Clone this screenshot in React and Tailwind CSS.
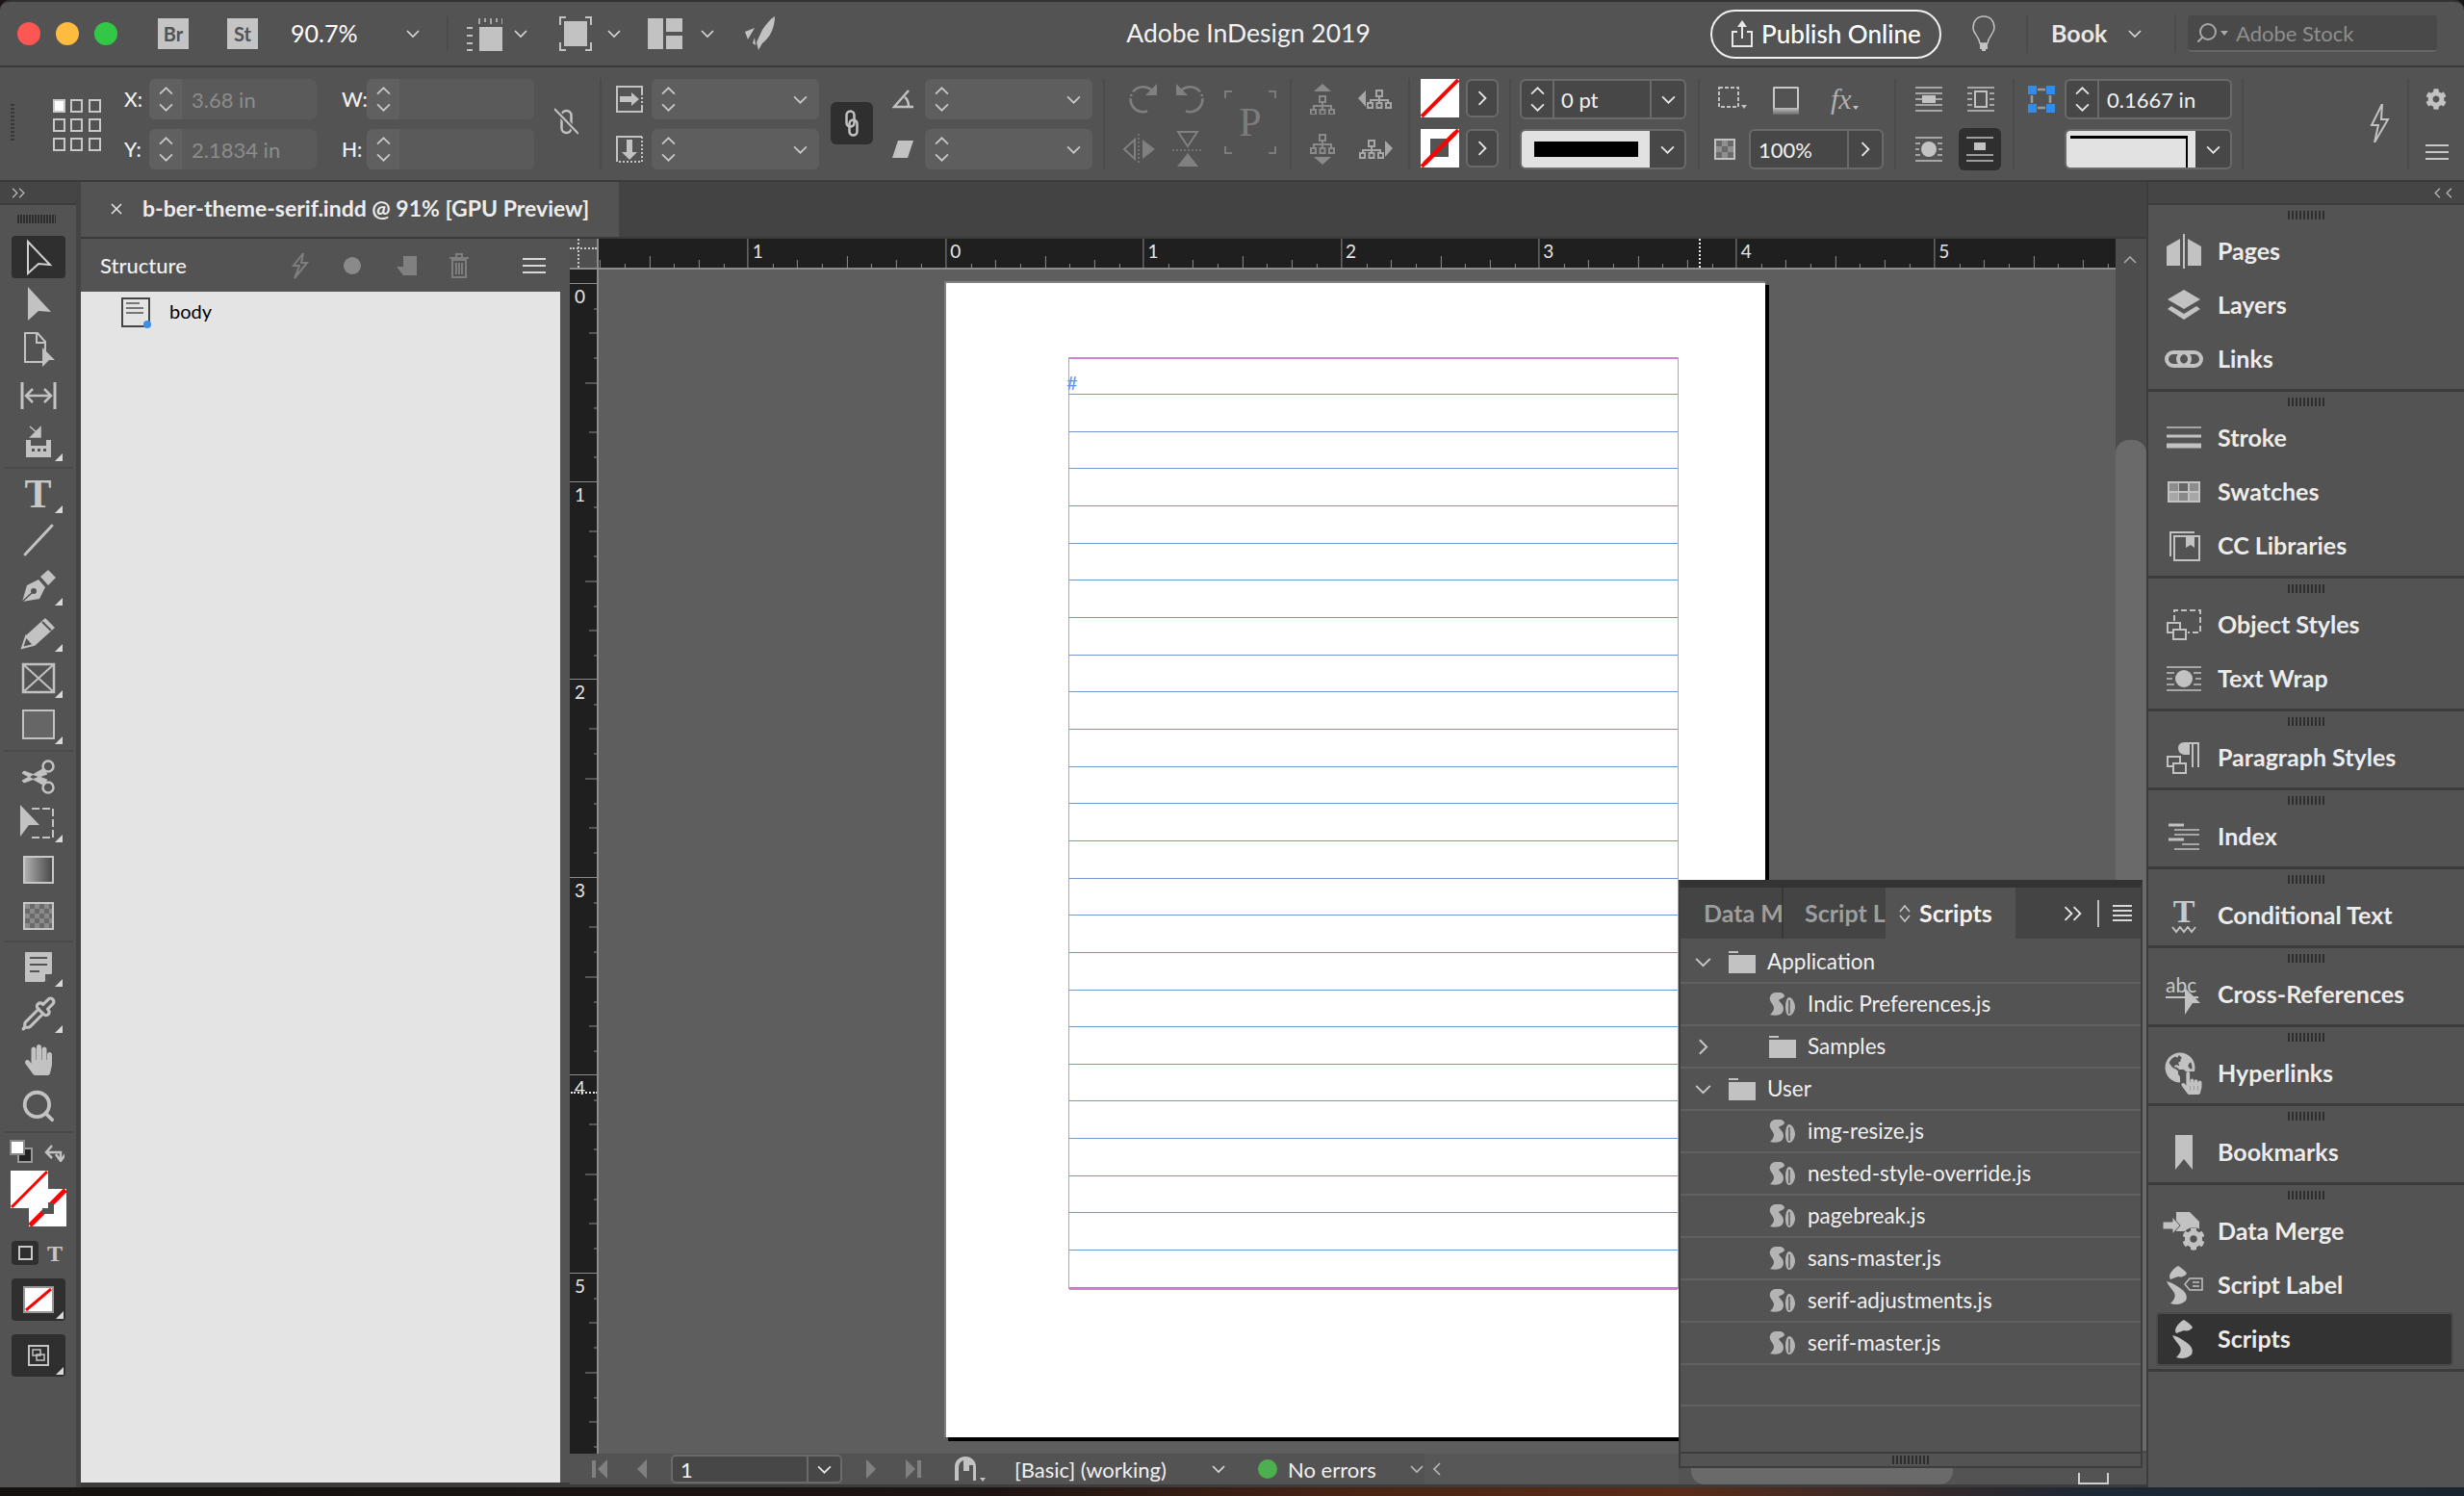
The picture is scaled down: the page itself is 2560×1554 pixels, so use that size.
import React from "react";
import { FaCog, FaHandPaper, FaGlobeAmericas, FaHandPointer } from "react-icons/fa";
import { Pipette, Search } from "lucide-react";

const C = "#c2c2c2";

function Svg({ w = 40, h = 40, vb, children, className = "" }) {
  return (
    <svg width={w} height={h} viewBox={vb || `0 0 ${w} ${h}`} className={"shrink-0 " + className}>
      {children}
    </svg>
  );
}

function Chev({ dir = "down", size = 14, color = "#d8d8d8" }) {
  const pts = {
    down: "1,4 7,10 13,4",
    up: "1,10 7,4 13,10",
    right: "4,1 10,7 4,13",
    left: "10,1 4,7 10,13",
  }[dir];
  return (
    <svg width={size} height={size} viewBox="0 0 14 14" className="shrink-0">
      <polyline points={pts} fill="none" stroke={color} strokeWidth="1.6" />
    </svg>
  );
}

function Grip({ className = "" }) {
  return (
    <div className={"h-[9px] w-[39px] bg-[repeating-linear-gradient(90deg,#2e2e2e_0_2px,transparent_2px_4px)] " + className} />
  );
}

function Divider({ ml }) {
  return <div style={{ marginLeft: ml }} className="h-[94px] w-[2px] shrink-0 bg-[#4b4b4b]" />;
}

function Slash({ w = 40, h = 40, sw = 4 }) {
  return (
    <svg width={w} height={h} viewBox={`0 0 ${w} ${h}`} className="block">
      <rect width={w} height={h} fill="#fff" />
      <line x1="1" y1={h - 1} x2={w - 1} y2="1" stroke="#f00" strokeWidth={sw} />
    </svg>
  );
}

/* ---------- title bar ---------- */

function TitleBar() {
  return (
    <div className="relative flex h-[68px] shrink-0 items-center rounded-t-[10px] border-t-2 border-[#333] bg-[#535353]">
      <div className="ml-[18px] h-[24px] w-[24px] rounded-full bg-[#fc5753]" />
      <div className="ml-[16px] h-[24px] w-[24px] rounded-full bg-[#fdbc40]" />
      <div className="ml-[16px] h-[24px] w-[24px] rounded-full bg-[#33c748]" />
      <div className="ml-[42px] flex h-[32px] w-[32px] items-center justify-center bg-[#c4c4c4] text-[20px] font-bold text-[#535353]">Br</div>
      <div className="ml-[40px] flex h-[32px] w-[32px] items-center justify-center bg-[#c4c4c4] text-[20px] font-bold text-[#535353]">St</div>
      <div className="ml-[34px] w-[70px] text-[25px] text-white">90.7%</div>
      <div className="ml-[50px]"><Chev /></div>
      <div className="ml-[28px] h-[36px] w-[2px] bg-[#4b4b4b]" />
      <div className="ml-[18px]">
        <Svg w={38} h={36}>
          <rect x="14" y="11" width="24" height="25" fill={C} />
          <path d="M14 2v6M20 2v4M26 2v6M32 2v4M38 2v6" stroke={C} strokeWidth="1.5" />
          <path d="M1 12h6M1 20h6M1 28h6M1 35h6" stroke={C} strokeWidth="2" />
        </Svg>
      </div>
      <div className="ml-[12px]"><Chev /></div>
      <div className="ml-[33px]">
        <Svg w={34} h={36}>
          <rect x="5" y="5" width="24" height="26" fill={C} />
          <path d="M7 1H1v8M27 1h6v8M7 35H1v-8M27 35h6v-8" fill="none" stroke={C} strokeWidth="2" />
        </Svg>
      </div>
      <div className="ml-[16px]"><Chev /></div>
      <div className="ml-[28px]">
        <Svg w={36} h={32}>
          <rect x="0" y="0" width="16" height="32" fill={C} />
          <rect x="19" y="0" width="17" height="14" fill={C} />
          <rect x="19" y="18" width="17" height="14" fill={C} />
        </Svg>
      </div>
      <div className="ml-[19px]"><Chev /></div>
      <div className="ml-[30px]">
        <Svg w={34} h={36}>
          <path d="M33 0C33 12 28 22 20 28L16 35 14 27 20 14 C24 8 28 3 33 0zM2 16l10-4-7 12zM13 30l-3-2 2-6z" fill={C} />
        </Svg>
      </div>
      <div className="ml-[356px] w-[270px] text-center text-[26.5px] text-[#f2f2f2]">Adobe InDesign 2019</div>
      <div className="ml-[345px] flex h-[51px] w-[240px] items-center justify-center gap-[8px] rounded-full border-2 border-[#f0f0f0] text-[26px] font-medium text-white">
        <Svg w={24} h={30}>
          <path d="M12 1l5 7h-4v12h-2V8H7z" fill="#e8e8e8" />
          <path d="M7 13H2v15h20V13h-5" fill="none" stroke="#e8e8e8" strokeWidth="2" />
        </Svg>
        Publish Online
      </div>
      <div className="ml-[30px]">
        <Svg w={28} h={38}>
          <path d="M14 1C7 1 3 6 3 13c0 6 6 8 7 16h8c1-8 7-10 7-16 0-7-4-12-11-12z" fill="none" stroke={C} strokeWidth="1.5" />
          <rect x="10" y="29" width="8" height="6" fill={C} />
          <rect x="12" y="35" width="4" height="2" fill={C} />
        </Svg>
      </div>
      <div className="ml-[30px] h-[40px] w-[2px] bg-[#4b4b4b]" />
      <div className="ml-[24px] w-[62px] text-[25px] font-bold text-[#e8e8e8]">Book</div>
      <div className="ml-[18px]"><Chev /></div>
      <div className="ml-[34px] h-[40px] w-[2px] bg-[#4b4b4b]" />
      <div className="ml-[12px] flex h-[38px] w-[259px] items-center rounded-[4px] border-b-2 border-[#666] bg-[#494949] pl-[8px]">
        <Search size={24} color="#a8a8a8" className="-scale-x-100" />
        <span className="ml-[2px] h-0 w-0 border-x-[4px] border-t-[5px] border-x-transparent border-t-[#a8a8a8]" />
        <span className="ml-[8px] text-[22px] text-[#8f8f8f]">Adobe Stock</span>
      </div>
    </div>
  );
}

/* ---------- control bar ---------- */

function Stepper({ dark, shade }) {
  return (
    <div className={"flex h-full w-[34px] shrink-0 flex-col items-center justify-center gap-[2px] " + (dark ? "border-r-2 border-[#6a6a6a]" : shade ? "bg-[#606060]" : "")}>
      <Chev dir="up" size={15} color={dark ? "#e8e8e8" : "#c8c8c8"} />
      <Chev size={15} color={dark ? "#e8e8e8" : "#c8c8c8"} />
    </div>
  );
}

function Field({ text, chevron, shade }) {
  return (
    <div className={"flex h-[42px] w-[174px] items-center overflow-hidden rounded-[6px] " + (shade ? "bg-[#5a5a5a]" : "bg-[#5e5e5e]")}>
      <Stepper shade={shade} />
      <span className="ml-[10px] flex-1 text-[22px] text-[#8c8c8c]">{text}</span>
      {chevron && <span className="mr-[12px]"><Chev size={15} color="#c8c8c8" /></span>}
    </div>
  );
}

function Labeled({ label, text }) {
  return (
    <div className="flex items-center">
      <span className="w-[26px] text-[21px] font-medium text-[#f0f0f0]">{label}</span>
      <Field text={text} shade />
    </div>
  );
}

function Col({ ml, children, gap = 10 }) {
  return (
    <div style={{ marginLeft: ml, rowGap: gap }} className="flex shrink-0 flex-col">
      {children}
    </div>
  );
}

function IconRow({ h = 42, gap = 0, children }) {
  return (
    <div style={{ height: h, columnGap: gap }} className="flex items-center">
      {children}
    </div>
  );
}

function DarkBox({ className = "", children }) {
  return (
    <div className={"flex h-[42px] items-center overflow-hidden rounded-[6px] border-2 border-[#6a6a6a] bg-[#474747] " + className}>
      {children}
    </div>
  );
}

function Tree({ dir }) {
  return (
    <Svg w={26} h={32}>
      {dir === "up" && <path d="M13 0l9 8H4z" fill="#8a8a8a" />}
      {dir === "down" && <path d="M13 32l9-8H4z" fill="#8a8a8a" />}
      <g transform={dir === "up" ? "translate(0,12)" : "translate(0,0)"} fill="none" stroke="#8a8a8a" strokeWidth="2">
        <rect x="10" y="1" width="6" height="6" />
        <path d="M13 7v4M4 15v-4h18v4M13 11v4" />
        <rect x="1" y="15" width="5" height="5" />
        <rect x="10.5" y="15" width="5" height="5" />
        <rect x="20" y="15" width="5" height="5" />
      </g>
    </Svg>
  );
}

function TreeSide({ flip }) {
  return (
    <Svg w={36} h={20} className={flip ? "-scale-x-100" : ""}>
      <path d="M0 9l8-8v17z" fill="#a6a6a6" />
      <g fill="none" stroke="#a6a6a6" strokeWidth="2">
        <rect x="19" y="1" width="6" height="6" />
        <path d="M22 7v4M13 15v-4h18v4M22 11v4" />
        <rect x="10" y="14" width="5" height="5" />
        <rect x="19.5" y="14" width="5" height="5" />
        <rect x="29" y="14" width="5" height="5" />
      </g>
    </Svg>
  );
}

function Wrap({ kind }) {
  return (
    <Svg w={28} h={26}>
      <path d="M0 1h28M0 25h28" stroke={C} strokeWidth="1.5" />
      {kind === "a" && <path d="M0 7h28M0 13h28M0 19h28" stroke={C} strokeWidth="1.5" />}
      {kind === "a" && <rect x="7" y="9" width="14" height="8" fill={C} />}
      {kind === "b" && <rect x="8" y="5" width="12" height="16" fill="none" stroke={C} strokeWidth="2" />}
      {kind === "b" && <path d="M0 7h5M0 13h5M0 19h5M23 7h5M23 13h5M23 19h5" stroke={C} strokeWidth="1.5" />}
      {kind === "c" && <circle cx="14" cy="13" r="8" fill={C} />}
      {kind === "c" && <path d="M0 7h5M0 13h4M0 19h5M23 7h5M24 13h4M23 19h5" stroke={C} strokeWidth="1.5" />}
      {kind === "d" && <rect x="8" y="6" width="12" height="8" fill={C} />}
      {kind === "d" && <path d="M0 19h28" stroke={C} strokeWidth="1.5" />}
    </Svg>
  );
}

function RefGrid() {
  const dots = [0, 1, 2];
  return (
    <div className="grid w-[50px] grid-cols-3 gap-x-[5px] gap-y-[6px]">
      {dots.map((r) =>
        dots.map((c) => (
          <div key={r + "-" + c} className={"h-[14px] w-[13px] border-2 border-[#c8c8c8] " + (r + c === 0 ? "bg-white" : "")} />
        ))
      )}
    </div>
  );
}

function Rotate({ flip }) {
  return (
    <Svg w={40} h={36} className={flip ? "-scale-x-100" : ""}>
      <path d="M33 12A13 13 0 1 0 27 30" fill="none" stroke="#808080" strokeWidth="2.5" strokeDasharray="26 3 2 2" />
      <path d="M36 2v12H24z" fill="#808080" />
    </Svg>
  );
}

function ArrowBtn() {
  return (
    <div className="flex h-[40px] w-[34px] items-center justify-center rounded-[6px] border-2 border-[#6a6a6a] bg-[#474747]">
      <Chev dir="right" size={16} color="#e8e8e8" />
    </div>
  );
}

function ControlBar() {
  return (
    <div className="flex h-[121px] shrink-0 items-start border-y-2 border-[#3a3a3a] bg-[#535353] pt-[12px]">
      <div className="ml-[11px] mt-[26px] h-[38px] w-[4px] bg-[repeating-linear-gradient(0deg,#383838_0_2px,transparent_2px_4px)]" />
      <div className="ml-[40px] mt-[21px]"><RefGrid /></div>
      <Col ml={24}>
        <Labeled label="X:" text="3.68 in" />
        <Labeled label="Y:" text="2.1834 in" />
      </Col>
      <Col ml={26}>
        <Labeled label="W:" />
        <Labeled label="H:" />
      </Col>
      <div className="ml-[21px] mt-[30px]">
        <Svg w={25} h={28}>
          <rect x="7.5" y="3" width="10" height="23" rx="5" fill="none" stroke={C} strokeWidth="2.5" />
          <path d="M0 1l25 26" stroke="#535353" strokeWidth="5" />
          <path d="M0 1l25 26" stroke={C} strokeWidth="2" />
        </Svg>
      </div>
      <Divider ml={22} />
      <Col ml={15}>
        <div className="flex h-[42px] items-center gap-[9px]">
          <Svg w={28} h={28}>
            <path d="M27 8V1H1v26h26V22" fill="none" stroke={C} strokeWidth="2" />
            <path d="M27 8v14M1 27h26" fill="none" stroke={C} strokeWidth="2" strokeDasharray="2 2" />
            <path d="M4 11h12V7l8 7-8 7v-4H4z" fill={C} />
          </Svg>
          <Field chevron />
        </div>
        <div className="flex h-[42px] items-center gap-[9px]">
          <Svg w={28} h={28}>
            <path d="M1 27V1h26" fill="none" stroke={C} strokeWidth="2" />
            <path d="M27 1v26H1" fill="none" stroke={C} strokeWidth="2" strokeDasharray="2 2" />
            <path d="M11 4h6v13h5l-8 8-8-8h5z" fill={C} />
          </Svg>
          <Field chevron />
        </div>
      </Col>
      <div className="ml-[12px] mt-[24px] flex h-[44px] w-[44px] items-center justify-center rounded-[6px] bg-[#2f2f2f]">
        <Svg w={14} h={28}>
          <rect x="1.5" y="1.5" width="8" height="16" rx="4" fill="none" stroke={C} strokeWidth="2.5" />
          <rect x="4.5" y="10.5" width="8" height="16" rx="4" fill="none" stroke={C} strokeWidth="2.5" />
        </Svg>
      </div>
      <Col ml={20}>
        <div className="flex h-[42px] items-center gap-[12px]">
          <Svg w={22} h={20}>
            <path d="M17 1L2 18h20M13 8c3 2 4 5 4 10" fill="none" stroke={C} strokeWidth="2.5" />
          </Svg>
          <Field chevron />
        </div>
        <div className="flex h-[42px] items-center gap-[12px]">
          <Svg w={22} h={18}>
            <path d="M6 0h16l-6 18H0z" fill={C} />
          </Svg>
          <Field chevron />
        </div>
      </Col>
      <Divider ml={11} />
      <Col ml={18}>
        <IconRow gap={12}>
          <Rotate />
          <Rotate flip />
        </IconRow>
        <IconRow gap={12}>
          <Svg w={38} h={36}>
            <path d="M17 2v32" stroke="#808080" strokeWidth="1.5" strokeDasharray="2 2" />
            <path d="M13 8v20L2 18z" fill="none" stroke="#808080" strokeWidth="2" />
            <path d="M21 8v20l13-10z" fill="#808080" />
          </Svg>
          <Svg w={36} h={38}>
            <path d="M18 16L8 1h20z" fill="none" stroke="#808080" strokeWidth="2" />
            <path d="M2 20h32" stroke="#808080" strokeWidth="1.5" strokeDasharray="2 2" />
            <path d="M18 23L7 37h22z" fill="#808080" />
          </Svg>
        </IconRow>
      </Col>
      <div className="relative ml-[14px] mt-[12px] flex h-[66px] w-[54px] items-center justify-center text-[42px] leading-none text-[#7c7c7c] [font-family:'Liberation_Serif',serif]">
        <span className="absolute left-0 top-0 h-[8px] w-[8px] border-l-2 border-t-2 border-[#7c7c7c]" />
        <span className="absolute right-0 top-0 h-[8px] w-[8px] border-r-2 border-t-2 border-[#7c7c7c]" />
        <span className="absolute bottom-0 left-0 h-[8px] w-[8px] border-b-2 border-l-2 border-[#7c7c7c]" />
        <span className="absolute bottom-0 right-0 h-[8px] w-[8px] border-b-2 border-r-2 border-[#7c7c7c]" />
        P
      </div>
      <Divider ml={14} />
      <Col ml={19} gap={10}>
        <IconRow h={42} gap={24}>
          <Tree dir="up" />
          <TreeSide />
        </IconRow>
        <IconRow h={42} gap={24}>
          <Tree dir="down" />
          <TreeSide flip />
        </IconRow>
      </Col>
      <Divider ml={16} />
      <Col ml={11} gap={12}>
        <div className="flex items-center gap-[7px]">
          <Slash w={40} h={40} />
          <ArrowBtn />
        </div>
        <div className="flex items-center gap-[7px]">
          <div className="relative h-[40px] w-[40px]">
            <Slash w={40} h={40} />
            <div className="absolute left-[10px] top-[10px] h-[19px] w-[19px] bg-[#535353]" />
            <svg width="40" height="40" className="absolute inset-0">
              <line x1="4" y1="36" x2="36" y2="4" stroke="#f00" strokeWidth="4.5" />
            </svg>
          </div>
          <ArrowBtn />
        </div>
      </Col>
      <Divider ml={11} />
      <Col ml={9}>
        <DarkBox className="w-[173px]">
          <Stepper dark />
          <span className="ml-[7px] flex-1 text-[22px] text-[#f2f2f2]">0 pt</span>
          <span className="flex h-full w-[36px] items-center justify-center border-l-2 border-[#6a6a6a]"><Chev size={15} color="#e8e8e8" /></span>
        </DarkBox>
        <DarkBox className="w-[173px]">
          <div className="flex h-full flex-1 items-center justify-center bg-[#e2e2e2]">
            <div className="h-[16px] w-[108px] bg-black" />
          </div>
          <span className="flex h-full w-[36px] items-center justify-center"><Chev size={15} color="#e8e8e8" /></span>
        </DarkBox>
      </Col>
      <Divider ml={12} />
      <Col ml={15}>
        <div className="flex h-[42px] items-start pl-[4px] pt-[8px]">
          <Svg w={30} h={24}>
            <rect x="1" y="1" width="20" height="20" fill="none" stroke={C} strokeWidth="2" strokeDasharray="4 2" />
            <path d="M24 19h6l-3 4z" fill={C} />
          </Svg>
          <div className="ml-[27px] flex w-[27px] flex-col">
            <div className="h-[22px] rounded-t-[2px] border-x-2 border-t-2 border-[#c8c8c8]" />
            <div className="h-[7px] bg-linear-to-b from-[#c2c2c2] to-[#6a6a6a]" />
          </div>
          <div className="ml-[33px] flex items-end text-[30px] italic leading-[26px] text-[#b0b0b0] [font-family:'Liberation_Serif',serif]">fx<span className="mb-[2px] ml-[1px] h-0 w-0 border-x-[3px] border-t-[4px] border-x-transparent border-t-[#c2c2c2]" /></div>
        </div>
        <div className="flex items-center">
          <Svg w={22} h={22}>
            <rect x="1" y="1" width="20" height="20" fill="#8f8f8f" stroke={C} strokeWidth="2" />
            <path d="M2 2h6v6H2zM14 2h6v6h-6zM8 8h6v6H8zM2 14h6v6H2zM14 14h6v6h-6z" fill="#6a6a6a" />
          </Svg>
          <DarkBox className="ml-[14px] w-[140px]">
            <span className="ml-[8px] flex-1 text-[22px] text-[#f2f2f2]">100%</span>
            <span className="flex h-full w-[36px] items-center justify-center border-l-2 border-[#6a6a6a]"><Chev dir="right" size={16} color="#e8e8e8" /></span>
          </DarkBox>
        </div>
      </Col>
      <Divider ml={11} />
      <Col ml={20}>
        <IconRow gap={26}><Wrap kind="a" /><Wrap kind="b" /></IconRow>
        <div className="flex h-[42px] items-center gap-[17px]">
          <Wrap kind="c" />
          <div className="-my-[2px] flex h-[44px] w-[44px] items-center justify-center rounded-[6px] bg-[#2f2f2f]"><Wrap kind="d" /></div>
        </div>
      </Col>
      <Divider ml={12} />
      <Col ml={14}>
        <div className="flex items-center gap-[10px]">
          <Svg w={28} h={28}>
            <rect x="0" y="0" width="9" height="9" fill="#2f8ceb" />
            <rect x="19" y="0" width="9" height="9" fill="#2f8ceb" />
            <rect x="0" y="19" width="9" height="9" fill="#2f8ceb" />
            <rect x="19" y="19" width="9" height="9" fill="#2f8ceb" />
            <path d="M10 4h8M10 23h8M4 10v8M23 10v8" stroke="#9a9a9a" strokeWidth="2.5" />
          </Svg>
          <DarkBox className="w-[174px]">
            <Stepper dark />
            <span className="ml-[8px] text-[22px] text-[#f2f2f2]">0.1667 in</span>
          </DarkBox>
        </div>
        <div className="flex items-center gap-[10px]">
          <div className="w-[28px]" />
          <DarkBox className="w-[174px]">
            <div className="flex h-full flex-1 items-start bg-[#e2e2e2] pl-[4px] pt-[5px]">
              <div className="h-[34px] w-[122px] border-r-2 border-t-[3px] border-black" />
            </div>
            <span className="flex h-full w-[36px] items-center justify-center"><Chev size={15} color="#e8e8e8" /></span>
          </DarkBox>
        </div>
      </Col>
      <Divider ml={10} />
      <div className="ml-[130px] mt-[26px]">
        <Svg w={22} h={40}>
          <path d="M14 0L3 22h7L6 40l14-24h-7z" fill="none" stroke={C} strokeWidth="2" />
        </Svg>
      </div>
      <Divider ml={18} />
      <Col ml={17} gap={36}>
        <FaCog size={22} color={C} className="mt-[10px]" />
        <div className="flex h-[16px] w-[24px] flex-col justify-between">
          <div className="h-[2px] bg-[#c8c8c8]" />
          <div className="h-[2px] bg-[#c8c8c8]" />
          <div className="h-[2px] bg-[#c8c8c8]" />
        </div>
      </Col>
    </div>
  );
}

/* ---------- left tools ---------- */

function Tool({ h = 48, tri, active, children }) {
  return (
    <div style={{ height: h }} className="relative flex w-full shrink-0 items-center justify-center">
      {active && <div className="absolute left-[12px] top-[2px] h-[44px] w-[56px] rounded-[4px] bg-[#2f2f2f]" />}
      <div className="relative flex items-center justify-center">{children}</div>
      {tri && <div className="absolute bottom-[4px] right-[14px] h-0 w-0 border-b-[8px] border-l-[8px] border-b-[#d8d8d8] border-l-transparent" />}
    </div>
  );
}

function Sep() {
  return <div className="mx-[4px] my-[2px] h-[2px] w-[72px] shrink-0 bg-[#4a4a4a]" />;
}

function Toolbar() {
  return (
    <div className="flex w-[79px] flex-1 flex-col bg-[#535353] pt-[2px]">
      <Tool active>
        <Svg>
          <path d="M9 4l23 24-12-1-11 10z" fill="none" stroke="#d0d0d0" strokeWidth="2" />
        </Svg>
      </Tool>
      <Tool>
        <Svg><path d="M9 3l24 26-13-1-11 10z" fill={C} /></Svg>
      </Tool>
      <Tool>
        <Svg>
          <path d="M27 26V12L19 3H6v30h20" fill="none" stroke={C} strokeWidth="2" />
          <path d="M18 3v10h9" fill="none" stroke={C} strokeWidth="2" />
          <path d="M24 18l13 13h-6l-7 7z" fill={C} />
        </Svg>
      </Tool>
      <Tool>
        <Svg>
          <path d="M3 6v28M37 6v28" stroke={C} strokeWidth="3" />
          <path d="M8 20h24M14 13l-7 7 7 7M26 13l7 7-7 7" fill="none" stroke={C} strokeWidth="2.5" />
        </Svg>
      </Tool>
      <Tool tri>
        <Svg>
          <path d="M7 18v18h26V18h-5v6H12v-6z" fill={C} />
          <path d="M13 27h3v3h-3zM19 27h3v3h-3zM25 27h3v3h-3z" fill="#535353" />
          <path d="M11 4l8 7M22 5v10H12z" fill={C} stroke={C} strokeWidth="1.5" />
        </Svg>
      </Tool>
      <Sep />
      <Tool tri>
        <span className="text-[42px] font-bold leading-none text-[#c8c8c8] [font-family:'Liberation_Serif',serif]">T</span>
      </Tool>
      <Tool>
        <Svg><line x1="6" y1="35" x2="34" y2="5" stroke={C} strokeWidth="3" strokeLinecap="round" /></Svg>
      </Tool>
      <Tool tri>
        <Svg>
          <path d="M3 36l5-17 12-6 7 8-6 12z" fill={C} />
          <path d="M22 10l8-7 8 8-8 8z" fill={C} />
          <circle cx="15" cy="25" r="3" fill="#535353" />
          <path d="M3 36l10-9" stroke="#535353" strokeWidth="1.5" />
        </Svg>
      </Tool>
      <Tool tri>
        <Svg>
          <path d="M3 36l4-13 20-18 10 10-20 18z" fill={C} />
          <path d="M3 36l4-12 8 9z" fill="#535353" stroke={C} strokeWidth="2" />
          <path d="M24 9l9 9" stroke="#535353" strokeWidth="2" />
        </Svg>
      </Tool>
      <Tool tri>
        <Svg>
          <rect x="4" y="5" width="32" height="29" fill="none" stroke={C} strokeWidth="2.5" />
          <path d="M4 5l32 29M36 5L4 34" stroke={C} strokeWidth="2" />
        </Svg>
      </Tool>
      <Tool tri>
        <Svg><rect x="4" y="5" width="32" height="29" fill="#666" stroke={C} strokeWidth="2" /></Svg>
      </Tool>
      <Sep />
      <Tool>
        <Svg>
          <circle cx="30" cy="9" r="5.5" fill="none" stroke={C} strokeWidth="2.5" />
          <circle cx="30" cy="31" r="5.5" fill="none" stroke={C} strokeWidth="2.5" />
          <path d="M26 11L3 24l2 2 24-9M26 29L3 16l2-2 24 9" fill={C} stroke={C} strokeWidth="1" />
        </Svg>
      </Tool>
      <Tool tri>
        <Svg>
          <path d="M1 1l20 21H10L1 34z" fill={C} />
          <path d="M13 5h22v30H12" fill="none" stroke={C} strokeWidth="2" strokeDasharray="8 3" />
        </Svg>
      </Tool>
      <Tool>
        <div className="h-[29px] w-[32px] border-2 border-[#c8c8c8] bg-linear-to-r from-[#b0b0b0] to-[#4a4a4a]" />
      </Tool>
      <Tool>
        <div className="h-[29px] w-[32px] border-2 border-[#c8c8c8] bg-[conic-gradient(#6a6a6a_25%,#8a8a8a_0_50%,#6a6a6a_0_75%,#8a8a8a_0)] bg-[length:10px_10px]" />
      </Tool>
      <Sep />
      <Tool tri>
        <Svg>
          <path d="M6 4h28v22l-8 9H6z" fill={C} />
          <path d="M11 10h18M11 17h18M11 24h10" stroke="#535353" strokeWidth="2" />
          <path d="M34 27h-7v7z" fill="#535353" />
        </Svg>
      </Tool>
      <Tool tri>
        <Pipette size={38} color={C} strokeWidth={2} />
      </Tool>
      <Tool>
        <FaHandPaper size={32} color={C} />
      </Tool>
      <Tool>
        <Search size={38} color={C} strokeWidth={2.4} />
      </Tool>
      <Sep />
      <div className="mx-[10px] mt-[4px] flex h-[26px] items-center justify-between pr-[2px]">
        <div className="relative h-[24px] w-[24px]">
          <div className="absolute bottom-0 right-0 h-[16px] w-[16px] border-2 border-[#999] bg-[#222]" />
          <div className="absolute left-0 top-0 h-[16px] w-[16px] border-2 border-[#888] bg-white" />
        </div>
        <Svg w={22} h={22}>
          <path d="M18 20v-8H5M9 5L3 12l6 6M13 14l5 7 5-7" fill="none" stroke={C} strokeWidth="2.5" />
        </Svg>
      </div>
      <div className="relative ml-[11px] mt-[7px] h-[58px] w-[58px]">
        <div className="absolute bottom-0 right-0 h-[39px] w-[39px]">
          <Slash w={39} h={39} sw={5} />
          <div className="absolute left-[14px] top-[14px] h-[12px] w-[12px] bg-[#535353]" />
        </div>
        <div className="absolute left-0 top-0 h-[39px] w-[39px]"><Slash w={39} h={39} sw={3} /></div>
      </div>
      <div className="ml-[12px] mt-[15px] flex items-center">
        <div className="flex h-[25px] w-[28px] items-center justify-center rounded-[4px] bg-[#2f2f2f]">
          <div className="h-[15px] w-[15px] border-2 border-[#c8c8c8]" />
        </div>
        <span className="ml-[9px] text-[24px] font-bold leading-none text-[#c8c8c8] [font-family:'Liberation_Serif',serif]">T</span>
      </div>
      <div className="relative ml-[12px] mt-[14px] flex h-[44px] w-[56px] items-center justify-center rounded-[4px] bg-[#2f2f2f]">
        <div className="border-2 border-[#999]"><Slash w={28} h={24} sw={3} /></div>
        <div className="absolute bottom-[2px] right-[2px] h-0 w-0 border-b-[8px] border-l-[8px] border-b-[#d8d8d8] border-l-transparent" />
      </div>
      <div className="relative ml-[12px] mt-[14px] flex h-[44px] w-[56px] items-center justify-center rounded-[4px] bg-[#2f2f2f]">
        <Svg w={22} h={22}>
          <rect x="1" y="1" width="20" height="20" fill="none" stroke={C} strokeWidth="2" />
          <rect x="5" y="5" width="8" height="6" fill="none" stroke={C} strokeWidth="1.5" />
          <rect x="9" y="10" width="8" height="6" fill="none" stroke={C} strokeWidth="1.5" />
        </Svg>
        <div className="absolute bottom-[2px] right-[2px] h-0 w-0 border-b-[8px] border-l-[8px] border-b-[#d8d8d8] border-l-transparent" />
      </div>
    </div>
  );
}

/* ---------- rulers ---------- */

function HCell({ label }) {
  return (
    <div className="relative h-full w-[205.4px] shrink-0 border-l border-[#8c8c8c]">
      <span className="absolute left-[4px] top-[2px] text-[19px] leading-[22px] text-[#e6e6e6]">{label}</span>
      <svg width="205" height="14" className="absolute bottom-0 left-0">
        {[1, 2, 3, 4, 5, 6, 7].map((i) => {
          const len = i === 4 ? 12 : i % 2 === 0 ? 8 : 4;
          const x = Math.round(i * 25.67);
          return <line key={i} x1={x} x2={x} y1={14 - len} y2="14" stroke="#8c8c8c" />;
        })}
      </svg>
    </div>
  );
}

function VCell({ label }) {
  return (
    <div className="relative h-[205.6px] w-full shrink-0 border-t border-[#8c8c8c]">
      <span className="absolute left-[5px] top-[2px] text-[19px] leading-[22px] text-[#e6e6e6]">{label}</span>
      <svg width="14" height="205" className="absolute right-0 top-0">
        {[1, 2, 3, 4, 5, 6, 7].map((i) => {
          const len = i === 4 ? 12 : i % 2 === 0 ? 8 : 3;
          const y = Math.round(i * 25.7);
          return <line key={i} y1={y} y2={y} x1={14 - len} x2="14" stroke="#8c8c8c" />;
        })}
      </svg>
    </div>
  );
}

/* ---------- page ---------- */

function Page() {
  const lines = Array.from({ length: 24 });
  return (
    <div className="ml-[359px] mt-[12px] h-[1201px] w-[853px] shrink-0 border-l-2 border-t-2 border-[#808080] bg-white pl-[127px] pt-[77px] shadow-[4px_4px_0_#000]">
      <div className="relative h-[968px] w-[634px] border-x border-[#a8a8b0]">
        <div className="h-[38px] border-t-2 border-[#cf82d0]" />
        <span className="absolute -left-[3px] top-[14px] text-[20px] leading-[24px] text-[#5f96e8]">#</span>
        {lines.map((_, i) => (
          <div key={i} className="h-[38.67px] border-t border-[#7199cf]" />
        ))}
        <div className="h-px bg-[#7199cf]" />
        <div className="h-[2px] bg-[#cf82d0]" />
      </div>
    </div>
  );
}

/* ---------- scripts panel ---------- */

function ScriptIcon() {
  return (
    <svg width="28" height="24" viewBox="0 0 28 24" className="shrink-0">
      <path d="M6 0c4-1 9 0 10 3 0 3-4 3-6 5l4 5c2 4 1 8-3 10-3 1-7 1-10 0 2-2 4-4 4-7S2 11 1 8C0 4 2 1 6 0z" fill="#b4b4b4" />
      <path d="M21 5c3 0 6 6 6 10s-3 9-6 9-4-5-4-9 1-10 4-10z" fill="#b4b4b4" />
      <path d="M21 8v14" stroke="#535353" strokeWidth="1.5" />
    </svg>
  );
}

function Folder() {
  return (
    <svg width="28" height="23" viewBox="0 0 28 23" className="shrink-0">
      <rect x="0" y="0" width="10" height="2" fill={C} />
      <rect x="0" y="4" width="28" height="19" fill={C} />
    </svg>
  );
}

function ScriptRow({ name }) {
  return (
    <div className="flex h-[44px] items-center border-b-2 border-[#616161] pl-[92px]">
      <ScriptIcon />
      <span className="ml-[12px] text-[22.5px] text-[#f0f0f0]">{name}</span>
    </div>
  );
}

function FolderRow({ name, open, nested }) {
  return (
    <div className="flex h-[44px] items-center border-b-2 border-[#616161]">
      <span className="ml-[15px] w-[23px]"><Chev dir={open ? "down" : "right"} size={17} color="#c8c8c8" /></span>
      <span className={nested ? "ml-[54px]" : "ml-[12px]"}><Folder /></span>
      <span className="ml-[12px] text-[22.5px] text-[#f0f0f0]">{name}</span>
    </div>
  );
}

function ScriptsPanel() {
  return (
    <div className="absolute left-[1660px] top-[725px] flex h-[611px] w-[482px] flex-col border-x-2 border-t-[8px] border-b-2 border-x-[#3d3d3d] border-b-[#3d3d3d] border-t-[#333] bg-[#535353]">
      <div className="flex h-[53px] shrink-0 items-stretch bg-[#444]">
        <div className="flex w-[107px] items-center border-r-2 border-[#383838] pl-[24px] text-[25px] font-bold whitespace-nowrap text-[#9e9e9e]">Data M</div>
        <div className="flex w-[106px] items-center pl-[22px] text-[25px] font-bold whitespace-nowrap text-[#9e9e9e]">Script L</div>
        <div className="flex w-[135px] items-center gap-[9px] bg-[#535353] pl-[14px] text-[25px] font-bold text-[#f2f2f2]">
          <svg width="12" height="20" viewBox="0 0 12 20">
            <polyline points="1,8 6,2 11,8" fill="none" stroke="#c8c8c8" strokeWidth="1.5" />
            <polyline points="1,12 6,18 11,12" fill="none" stroke="#c8c8c8" strokeWidth="1.5" />
          </svg>
          Scripts
        </div>
        <div className="flex flex-1 items-center pl-[47px]">
          <Chev dir="right" size={16} color="#e8e8e8" />
          <span className="-ml-[7px]"><Chev dir="right" size={16} color="#e8e8e8" /></span>
          <div className="ml-[13px] h-[28px] w-[2px] bg-[#bdbdbd]" />
          <div className="ml-[14px] flex h-[18px] w-[20px] flex-col justify-between">
            <div className="h-[2px] bg-[#d8d8d8]" />
            <div className="h-[2px] bg-[#d8d8d8]" />
            <div className="h-[2px] bg-[#d8d8d8]" />
            <div className="h-[2px] bg-[#d8d8d8]" />
          </div>
        </div>
      </div>
      <div className="flex-1 pt-[3px]">
        <FolderRow name="Application" open />
        <ScriptRow name="Indic Preferences.js" />
        <FolderRow name="Samples" nested />
        <FolderRow name="User" open />
        <ScriptRow name="img-resize.js" />
        <ScriptRow name="nested-style-override.js" />
        <ScriptRow name="pagebreak.js" />
        <ScriptRow name="sans-master.js" />
        <ScriptRow name="serif-adjustments.js" />
        <ScriptRow name="serif-master.js" />
        <div className="h-[43px] border-b-2 border-[#616161]" />
      </div>
      <div className="flex h-[15px] shrink-0 items-center justify-center border-t-2 border-[#3d3d3d] bg-[#535353]">
        <Grip />
      </div>
    </div>
  );
}

/* ---------- status bar ---------- */

function NavTri({ flip, bar }) {
  return (
    <svg width="18" height="24" viewBox="0 0 18 24" className={"shrink-0 " + (flip ? "-scale-x-100" : "")}>
      {bar && <rect x="0" y="3" width="4" height="18" fill="#808080" />}
      <path d="M16 2v20L6 12z" fill="#808080" />
    </svg>
  );
}

function StatusBar() {
  return (
    <div className="flex h-[32px] shrink-0 items-center bg-[#535353] pl-[23px]">
      <NavTri bar />
      <div className="ml-[23px]"><NavTri /></div>
      <div className="ml-[23px] flex h-[30px] w-[178px] items-center rounded-[5px] border-2 border-[#6a6a6a] bg-[#474747]">
        <span className="ml-[8px] flex-1 text-[22px] text-[#f2f2f2]">1</span>
        <span className="flex h-full w-[35px] items-center justify-center border-l-2 border-[#6a6a6a]"><Chev size={15} color="#e8e8e8" /></span>
      </div>
      <div className="ml-[23px]"><NavTri flip /></div>
      <div className="ml-[23px]"><NavTri flip bar /></div>
      <div className="ml-[33px]">
        <Svg w={36} h={28}>
          <path d="M2 26V12C2 5 7 1 13 1s11 4 11 11v14h-3V10h-4v6h-6V5C8 6 6 9 6 12v14z" fill={C} />
          <path d="M28 23h6l-3 4z" fill={C} />
        </Svg>
      </div>
      <span className="ml-[28px] w-[190px] text-[22px] text-[#f0f0f0]">[Basic] (working)</span>
      <div className="ml-[15px]"><Chev /></div>
      <div className="ml-[34px] h-[20px] w-[20px] rounded-full bg-[#4caf50]" />
      <span className="ml-[11px] w-[92px] text-[22px] text-[#f0f0f0]">No errors</span>
      <div className="ml-[35px]"><Chev color="#b8b8b8" /></div>
      <div className="ml-[1px] flex h-full w-[264px] shrink-0 items-center bg-[#575757] pl-[6px]"><Chev dir="left" color="#b8b8b8" /></div>
      <div className="ml-[13px] mt-auto h-[17px] w-[272px] shrink-0 rounded-b-[14px] bg-[#6a6a6a]" />
      <div className="ml-[130px] mt-auto h-[12px] w-[32px] shrink-0 border-x-2 border-b-2 border-[#d0d0d0]" />
    </div>
  );
}

/* ---------- right dock ---------- */

function DockItem({ label, icon, active }) {
  return (
    <div className={"ml-[8px] mr-[11px] flex h-[56px] items-center rounded-[4px] border-2 pl-[2px] " + (active ? "border-[#4a4a4a] bg-[#333]" : "border-transparent")}>
      <div className="flex w-[50px] items-center justify-center">{icon}</div>
      <span className="ml-[10px] text-[25px] font-bold text-[#ececec]">{label}</span>
    </div>
  );
}

function DockGroup({ children }) {
  return (
    <div className="border-b-[3px] border-[#3c3c3c] pb-[3px]">
      <div className="flex h-[20px] items-center justify-center"><Grip /></div>
      {children}
    </div>
  );
}

function ScriptShape() {
  return (
    <svg width="28" height="40" viewBox="0 0 28 40" className="shrink-0">
      <path d="M14 0c4 3 8 5 9 8-2 3-6 4-9 3L6 14C3 10 8 3 14 0z" fill={C} />
      <path d="M2 16c4 1 6 2 11 5 6 4 12 8 9 15-4 4-10 5-16 3 3-3 6-6 4-11-2-4-6-7-8-12z" fill={C} />
    </svg>
  );
}

function Dock() {
  return (
    <div className="flex w-[330px] shrink-0 flex-col border-l-2 border-[#3c3c3c] bg-[#535353]">
      <div className="flex h-[24px] shrink-0 items-center justify-end gap-[1px] border-b-2 border-[#3c3c3c] bg-[#454545] pr-[10px]">
        <Chev dir="left" size={11} color="#b8b8b8" />
        <Chev dir="left" size={11} color="#b8b8b8" />
      </div>
      <DockGroup>
        <DockItem label="Pages" icon={
          <Svg w={36} h={36}>
            <path d="M0 13l14-8v28H0zM36 13L22 5v28h14z" fill={C} />
            <path d="M18 0v36" stroke={C} strokeWidth="2" />
          </Svg>} />
        <DockItem label="Layers" icon={
          <Svg w={36} h={32}>
            <path d="M18 0l17 10-17 10L1 10z" fill={C} />
            <path d="M5 17l13 8 13-8 4 3-17 11L1 20z" fill={C} />
          </Svg>} />
        <DockItem label="Links" icon={
          <Svg w={40} h={20}>
            <rect x="2" y="3" width="24" height="14" rx="7" fill="none" stroke={C} strokeWidth="4" />
            <rect x="14" y="3" width="24" height="14" rx="7" fill="none" stroke={C} strokeWidth="4" />
          </Svg>} />
      </DockGroup>
      <DockGroup>
        <DockItem label="Stroke" icon={
          <Svg w={36} h={24}>
            <path d="M0 1h36" stroke={C} strokeWidth="1.5" />
            <path d="M0 10h36" stroke={C} strokeWidth="3" />
            <path d="M0 20h36" stroke={C} strokeWidth="5" />
          </Svg>} />
        <DockItem label="Swatches" icon={
          <Svg w={34} h={22}>
            <rect width="34" height="22" fill={C} />
            <rect x="2" y="2" width="9" height="8" fill="#8c8c8c" />
            <rect x="12" y="2" width="9" height="8" fill="#666" />
            <rect x="23" y="2" width="9" height="8" fill="#8c8c8c" />
            <rect x="2" y="12" width="9" height="8" fill="#a6a6a6" />
            <rect x="12" y="12" width="9" height="8" fill="#888" />
            <rect x="23" y="12" width="9" height="8" fill="#a6a6a6" />
          </Svg>} />
        <DockItem label="CC Libraries" icon={
          <Svg w={34} h={32}>
            <path d="M3 27V2h25" fill="none" stroke={C} strokeWidth="2" />
            <rect x="7" y="6" width="26" height="25" fill="none" stroke={C} strokeWidth="2" />
            <path d="M19 6h9v12l-4-3-5 3z" fill={C} />
          </Svg>} />
      </DockGroup>
      <DockGroup>
        <DockItem label="Object Styles" icon={
          <Svg w={36} h={32}>
            <path d="M8 12V1h27v23H22" fill="none" stroke={C} strokeWidth="2" strokeDasharray="6 3" />
            <rect x="1" y="14" width="13" height="10" fill="#535353" stroke={C} strokeWidth="2" />
            <rect x="7" y="21" width="13" height="10" fill="#535353" stroke={C} strokeWidth="2" />
          </Svg>} />
        <DockItem label="Text Wrap" icon={
          <Svg w={36} h={26}>
            <path d="M0 1h36M0 25h36" stroke={C} strokeWidth="1.5" />
            <path d="M0 7h8M0 13h6M0 19h8M28 7h8M30 13h6M28 19h8" stroke={C} strokeWidth="1.5" />
            <ellipse cx="18" cy="13" rx="9" ry="9" fill={C} />
          </Svg>} />
      </DockGroup>
      <DockGroup>
        <DockItem label="Paragraph Styles" icon={
          <Svg w={36} h={34}>
            <rect x="1" y="16" width="13" height="10" fill="#535353" stroke={C} strokeWidth="2" />
            <rect x="7" y="23" width="13" height="10" fill="#535353" stroke={C} strokeWidth="2" />
            <path d="M24 1h-5c-5 0-7 3-7 6s2 7 7 7h5z" fill={C} />
            <path d="M26 1h2v26h-2zM32 1h2v26h-2zM24 1h10v2H24z" fill={C} />
          </Svg>} />
      </DockGroup>
      <DockGroup>
        <DockItem label="Index" icon={
          <Svg w={32} h={28}>
            <path d="M0 2h16M0 17h16" stroke={C} strokeWidth="3" />
            <path d="M6 7h26M6 12h26M14 22h18M6 27h26" stroke={C} strokeWidth="1.5" />
          </Svg>} />
      </DockGroup>
      <DockGroup>
        <DockItem label="Conditional Text" icon={
          <div className="flex flex-col items-center">
            <span className="text-[34px] font-bold leading-[30px] text-[#c8c8c8] [font-family:'Liberation_Serif',serif]">T</span>
            <Svg w={26} h={8}><path d="M1 1l4 5 4-5 4 5 4-5 4 5 4-5" fill="none" stroke={C} strokeWidth="2" /></Svg>
          </div>} />
      </DockGroup>
      <DockGroup>
        <DockItem label="Cross-References" icon={
          <div className="relative h-[42px] w-[38px]">
            <span className="absolute left-0 top-0 text-[21px] leading-[22px] text-[#c8c8c8]">abc</span>
            <div className="absolute left-0 top-[23px] h-[2px] w-[34px] bg-[#c2c2c2]" />
            <svg width="38" height="42" className="absolute inset-0">
              <path d="M20 14l16 16-8 0-8 12z" fill={C} />
            </svg>
          </div>} />
      </DockGroup>
      <DockGroup>
        <DockItem label="Hyperlinks" icon={
          <div className="relative h-[44px] w-[40px]">
            <FaGlobeAmericas size={32} color={C} />
            <div className="absolute bottom-0 right-0 rounded-[6px] bg-[#535353]">
              <FaHandPointer size={24} color={C} />
            </div>
          </div>} />
      </DockGroup>
      <DockGroup>
        <DockItem label="Bookmarks" icon={
          <Svg w={20} h={36}><path d="M1 0h18v36l-9-11-9 11z" fill={C} /></Svg>} />
      </DockGroup>
      <DockGroup>
        <DockItem label="Data Merge" icon={
          <div className="relative h-[40px] w-[44px]">
            <svg width="44" height="40" className="absolute inset-0">
              <path d="M14 0h14l10 10v10H14z" fill={C} />
              <path d="M0 10h10V5l8 9-8 9v-5H0z" fill={C} stroke="#535353" />
            </svg>
            <div className="absolute bottom-0 right-0 rounded-full bg-[#535353]"><FaCog size={24} color={C} /></div>
          </div>} />
        <DockItem label="Script Label" icon={
          <div className="relative h-[40px] w-[40px]">
            <ScriptShape />
            <svg width="20" height="14" className="absolute right-0 top-[12px]">
              <path d="M6 1h13v12H6L1 7z" fill="#535353" stroke={C} strokeWidth="1.5" />
              <path d="M9 5h7M9 9h7" stroke={C} strokeWidth="1.5" />
            </svg>
          </div>} />
        <DockItem label="Scripts" active icon={<ScriptShape />} />
      </DockGroup>
    </div>
  );
}

export default function App() {
  return (
    <div className="flex h-[1554px] w-[2560px] flex-col overflow-hidden bg-[#1a1512] [font-family:Lato,'Noto_Sans',sans-serif]">
      <TitleBar />
      <ControlBar />
      <div className="flex h-[1356px] shrink-0">
        <div className="flex w-[84px] shrink-0 flex-col border-r-[5px] border-[#444] bg-[#535353]">
          <div className="flex h-[24px] shrink-0 items-center border-b-2 border-[#3c3c3c] bg-[#454545] pl-[10px]">
            <Chev dir="right" size={11} color="#b8b8b8" />
            <span className="-ml-[4px]"><Chev dir="right" size={11} color="#b8b8b8" /></span>
          </div>
          <div className="flex h-[28px] shrink-0 items-center pl-[18px]">
            <div className="h-[9px] w-[40px] bg-[repeating-linear-gradient(90deg,#2e2e2e_0_2px,transparent_2px_3px)]" />
          </div>
          <Toolbar />
        </div>
        <div className="relative flex min-w-0 flex-1 flex-col bg-[#454545]">
          <div className="flex h-[59px] shrink-0 border-b-2 border-[#3a3a3a] bg-[#434343]">
            <div className="flex w-[559px] items-center bg-[#535353] pb-[2px] text-[23px] font-bold text-[#ececec]">
              <svg width="14" height="14" viewBox="0 0 14 14" className="ml-[30px]">
                <path d="M2 2l10 10M12 2L2 12" stroke="#e8e8e8" strokeWidth="1.5" />
              </svg>
              <span className="ml-[20px] whitespace-nowrap">b-ber-theme-serif.indd @ 91% [GPU Preview]</span>
            </div>
          </div>
          <div className="flex min-h-0 flex-1">
            <div className="flex w-[508px] shrink-0 flex-col bg-[#535353]">
              <div className="flex h-[55px] shrink-0 items-center pl-[20px]">
                <span className="w-[182px] text-[22px] font-medium text-[#f0f0f0]">Structure</span>
                <Svg w={20} h={28} className="ml-[16px]">
                  <path d="M13 1L3 14h6L4 27l13-16h-6z" fill="none" stroke="#7e7e7e" strokeWidth="2" />
                </Svg>
                <div className="ml-[35px] h-[18px] w-[18px] rounded-full bg-[#8a8a8a]" />
                <Svg w={22} h={22} className="ml-[36px]">
                  <path d="M8 1h14v20H8L1 12h7z" fill="#808080" />
                </Svg>
                <Svg w={22} h={26} className="ml-[33px]">
                  <path d="M4 7h14v18H4zM1 5h20M8 5V1h6v4M8 10v12M11 10v12M14 10v12" fill="none" stroke="#7e7e7e" strokeWidth="2" />
                </Svg>
                <div className="ml-[55px] flex h-[16px] w-[24px] flex-col justify-between">
                  <div className="h-[2px] bg-[#d8d8d8]" />
                  <div className="h-[2px] bg-[#d8d8d8]" />
                  <div className="h-[2px] bg-[#d8d8d8]" />
                </div>
              </div>
              <div className="mr-[10px] flex flex-1 items-start bg-[#e4e4e4] pl-[42px] pt-[6px]">
                <div className="relative h-[31px] w-[30px] border-2 border-[#444] p-[3px]">
                  <div className="h-[2px] w-[14px] bg-[#777]" />
                  <div className="mt-[3px] h-[2px] w-[18px] bg-[#777]" />
                  <div className="mt-[3px] h-[2px] w-[18px] bg-[#777]" />
                  <div className="absolute -bottom-[3px] -right-[3px] h-[8px] w-[8px] rounded-full bg-[#3a8fe8]" />
                </div>
                <span className="ml-[20px] text-[20px] leading-[28px] text-black">body</span>
              </div>
              <div className="h-[5px] shrink-0 bg-[#3c3c3c]" />
            </div>
            <div className="flex min-w-0 flex-1 flex-col">
              <div className="flex min-h-0 flex-1">
                <div className="flex min-w-0 flex-1 flex-col">
                  <div className="relative flex h-[32px] shrink-0 overflow-hidden border-b-2 border-[#8c8c8c] bg-[#1f1f1f]">
                    <div className="relative z-10 h-full w-[30px] shrink-0 border-r-2 border-[#8c8c8c] bg-[#4f4f4f]">
                      <div className="absolute left-[8px] top-0 h-full border-l-2 border-dotted border-[#c8c8c8]" />
                      <div className="absolute left-0 top-[9px] w-full border-t-2 border-dotted border-[#c8c8c8]" />
                    </div>
                    <div className="relative flex flex-1 -translate-x-[50.6px]">
                      <HCell />
                      <HCell label="1" />
                      <HCell label="0" />
                      <HCell label="1" />
                      <HCell label="2" />
                      <HCell label="3" />
                      <HCell label="4" />
                      <HCell label="5" />
                      <HCell />
                    </div>
                    <div className="absolute left-[1173px] top-0 h-full border-l-2 border-dotted border-[#e8e8e8]" />
                  </div>
                  <div className="relative flex min-h-0 flex-1 overflow-hidden bg-[#5e5e5e]">
                    <div className="relative h-full w-[30px] shrink-0 overflow-hidden border-r-2 border-[#8c8c8c] bg-[#1f1f1f]">
                      <div className="h-[14px]" />
                      <VCell label="0" />
                      <VCell label="1" />
                      <VCell label="2" />
                      <VCell label="3" />
                      <VCell label="4" />
                      <VCell label="5" />
                      <div className="absolute left-[1px] top-[854px] w-[28px] border-t-2 border-dotted border-[#e8e8e8]" />
                    </div>
                    <Page />
                  </div>
                </div>
                <div className="w-[32px] shrink-0 overflow-hidden bg-[#4d4d4d] pt-[15px]">
                  <div className="ml-[8px]"><Chev dir="up" size={14} color="#a8a8a8" /></div>
                  <div className="mt-[180px] h-[1050px] rounded-t-[14px] bg-[#6a6a6a]" />
                </div>
              </div>
              <StatusBar />
              <div className="h-[3px] shrink-0 bg-[#3c3c3c]" />
            </div>
          </div>
          <ScriptsPanel />
        </div>
        <Dock />
      </div>
      <div className="flex-1 bg-[linear-gradient(90deg,#15110f_0%,#1c1412_40%,#4a2414_55%,#5a2c18_68%,#1d2836_85%,#1a2430_100%)]" />
    </div>
  );
}
